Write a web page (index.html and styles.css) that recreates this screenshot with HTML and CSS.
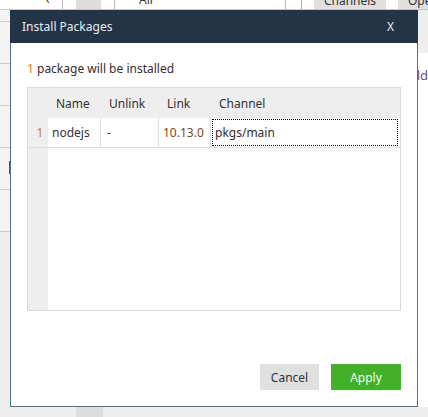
FILE: index.html
```html
<!DOCTYPE html>
<html>
<head>
<meta charset="utf-8">
<link rel="stylesheet" href="styles.css">
</head>
<body>
<div class="app">
  <div class="topbar">
    <div class="tb-a"><span class="caret">‹</span></div>
    <div class="tb-b"></div>
    <div class="tb-c"></div>
    <div class="tb-input"><span>All</span></div>
    <div class="tb-d"></div>
    <div class="tb-gap"></div>
    <div class="tb-btn">Channels</div>
    <div class="tb-gap2"></div>
    <div class="tb-btn2">Ope</div>
  </div>
  <div class="main">
    <div class="side">
      <div class="side-row"></div>
      <div class="side-row"></div>
      <div class="side-row"></div>
      <div class="side-row"></div>
      <div class="side-row active"></div>
      <div class="side-row"></div>
      <div class="side-rest"></div>
    </div>
    <div class="content">
      <div class="content-top"></div>
      <div class="content-text">ld</div>
    </div>
  </div>
  <div class="footer">
    <div class="ft-a"></div>
    <div class="ft-b"></div>
  </div>
</div>

<div class="modal">
  <div class="modal-head">
    <span class="modal-title">Install Packages</span>
    <span class="modal-close">X</span>
  </div>
  <div class="modal-body">
    <p class="summary"><span class="num">1</span> package will be installed</p>
    <div class="table">
      <div class="tr thead">
        <div class="idx"></div>
        <div class="c name">Name</div>
        <div class="c unlink">Unlink</div>
        <div class="c link">Link</div>
        <div class="c chan">Channel</div>
      </div>
      <div class="tr trow">
        <div class="idx num">1</div>
        <div class="c name">nodejs</div>
        <div class="c unlink">-</div>
        <div class="c link ver">10.13.0</div>
        <div class="c chan focus">pkgs/main</div>
      </div>
      <div class="tr tfill">
        <div class="idx"></div>
        <div class="fill"></div>
      </div>
    </div>
  </div>
  <div class="modal-foot">
    <button class="btn cancel">Cancel</button>
    <button class="btn apply">Apply</button>
  </div>
</div>
</body>
</html>
```

FILE: styles.css
```css
* { box-sizing: border-box; }
html, body { margin: 0; padding: 0; }
body {
  width: 428px;
  height: 417px;
  overflow: hidden;
  background: #eeeeee;
  font-family: "Noto Sans", "DejaVu Sans", sans-serif;
  font-size: 12px;
  color: #333;
  position: relative;
}
.app { display: flex; flex-direction: column; height: 417px; }
.topbar {
  display: flex;
  height: 10px;
  flex: none;
  background: #fff;
  border-bottom: 1px solid #c8c8c8;
  overflow: hidden;
}
.tb-a { width: 63px; border-right: 1px solid #bbb; position: relative; }
.caret { position: absolute; left: 46px; top: -9px; font-size: 12px; color: #333; }
.tb-b { width: 13px; }
.tb-c { width: 25px; background: #dddddd; }
.tb-input {
  margin-left: 13px;
  width: 172px;
  border-left: 1px solid #bbb;
  border-right: 1px solid #bbb;
  position: relative;
}
.tb-input span { position: absolute; left: 24px; top: -9px; color: #333; }
.tb-d { width: 16px; border-right: 1px solid #aaa; }
.tb-gap { width: 12px; }
.tb-btn {
  width: 72px; background: #e0e0e0; color: #333;
  line-height: 2px; text-align: center; overflow: hidden;
}
.tb-gap2 { width: 12px; }
.tb-btn2 { flex: 1; background: #e0e0e0; line-height: 2px; padding-left: 10px; overflow: hidden; }

.main { display: flex; flex: 1; }
.side { width: 62px; display: flex; flex-direction: column; background: #f3f3f3; }
.side-row { height: 42px; flex: none; border-bottom: 1px solid #cccccc; position: relative; }
.side-row:first-child { height: 12px; }
.side-row.active::after {
  content: ""; position: absolute; left: 9px; top: 13px;
  width: 2px; height: 13px; background: #1e6e5a;
}
.side-rest { flex: 1; background: #eeeeee; }
.content { flex: 1; background: #fff; display: flex; flex-direction: column; }
.content-top { height: 43px; background: #eeeeee; }
.content-text { padding: 13px 0 0 356px; color: #6a4a7a; font-size: 13px; }
.footer { height: 10px; flex: none; display: flex; background: #eeeeee; }
.ft-a { width: 76px; }
.ft-b { width: 27px; background: #dddddd; }

/* modal */
.modal {
  position: absolute;
  left: 10px; top: 10px;
  width: 408px; height: 397px;
  background: #fff;
  border: 1px solid #4f7389;
  display: flex;
  flex-direction: column;
}
.modal-head {
  height: 33px;
  background: #243447;
  color: #e6ecf0;
  display: flex;
  align-items: center;
  justify-content: space-between;
  padding: 0 24px 0 12px;
  margin: -1px -1px 0 -1px;
  font-size: 12px;
}
.modal-close { font-size: 12px; }
.modal-body { padding: 17px 16px 0 16px; flex: 1; }
.summary { margin: 0 0 9px 0; line-height: 18px; color: #3a2a2a; }
.num { color: #c8801c; }
.table {
  border: 1px solid #dadada;
  height: 224px;
  display: flex;
  flex-direction: column;
}
.tr { display: flex; }
.idx { width: 20px; background: #eeeeee; flex: none; text-align: center; }
.thead { height: 30px; background: #eeeeee; align-items: center; color: #333; }
.thead .c { padding-left: 8px; }
.trow { height: 30px; border-bottom: 1px solid #dddddd; align-items: stretch; }
.trow .idx { display: flex; align-items: center; justify-content: center; padding-left: 4px; }
.trow .c { display: flex; align-items: center; padding-left: 4px; border-right: 1px solid #dddddd; }
.c.name { width: 53px; }
.c.unlink { width: 58px; }
.c.link { width: 52px; }
.c.chan { flex: 1; }
.trow .c.unlink { padding-left: 6px; }
.ver { color: #7a4a10; }
.trow .c.focus {
  border: 1px dotted #000;
  margin: 1px 2px 1px 1px;
  padding-left: 2px;
  color: #3a2a2a;
}
.tfill { flex: 1; }
.fill { flex: 1; background: #fff; }

.modal-foot {
  display: flex;
  justify-content: flex-end;
  gap: 12px;
  padding: 0 16px 16px 0;
}
.btn {
  border: none;
  height: 26px;
  font-family: inherit;
  font-size: 12px;
  cursor: pointer;
}
.cancel { width: 59px; background: #e0e0e0; color: #333; }
.apply { width: 70px; background: #43b02a; color: #f0fff0; }
```
